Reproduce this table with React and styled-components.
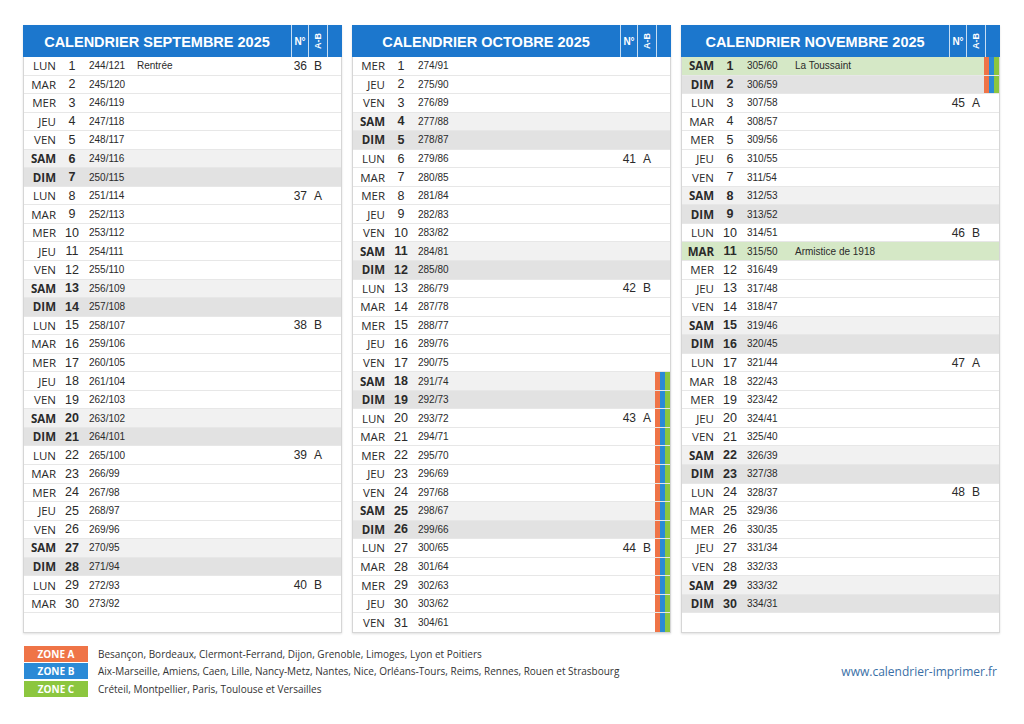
import React from 'react'
import styled, { createGlobalStyle } from 'styled-components'

const GlobalStyle = createGlobalStyle`
  body {
    margin: 0;
    background: #ffffff;
    font-family: 'Liberation Sans', Arial, sans-serif;
  }
`

const WEEKDAY = ['LUN', 'MAR', 'MER', 'JEU', 'VEN', 'SAM', 'DIM']

const MONTHS = [
  { name: 'SEPTEMBRE', days: 30, start: 244, wd: 0, events: { 1: 'Rentrée' }, green: [], zones: [] },
  { name: 'OCTOBRE', days: 31, start: 274, wd: 2, events: {}, green: [], zones: [18, 31] },
  {
    name: 'NOVEMBRE',
    days: 30,
    start: 305,
    wd: 5,
    events: { 1: 'La Toussaint', 11: 'Armistice de 1918' },
    green: [1, 11],
    zones: [1, 2],
  },
]

const ZONES = [
  { label: 'ZONE A', color: '#ef7447', text: 'Besançon, Bordeaux, Clermont-Ferrand, Dijon, Grenoble, Limoges, Lyon et Poitiers' },
  {
    label: 'ZONE B',
    color: '#2b8ad6',
    text: 'Aix-Marseille, Amiens, Caen, Lille, Nancy-Metz, Nantes, Nice, Orléans-Tours, Reims, Rennes, Rouen et Strasbourg',
  },
  { label: 'ZONE C', color: '#8cc63f', text: 'Créteil, Montpellier, Paris, Toulouse et Versailles' },
]

const ROW_BG = {
  normal: '#ffffff',
  sam: '#f1f1f1',
  dim: '#e2e2e2',
  holiday: '#d5e8c6',
  empty: '#ffffff',
}

const Page = styled.div`
  padding: 25px 24px 0 23px;
`

const Columns = styled.div`
  display: grid;
  grid-template-columns: repeat(3, 319px);
  gap: 10px;
`

const Month = styled.div`
  display: flex;
  flex-direction: column;
  box-shadow: 0 1px 2px rgba(0, 0, 0, 0.12);
`

const Header = styled.div`
  height: 32px;
  background: #1c77cd;
  display: grid;
  grid-template-columns: 1fr 17px 19px 15px;
  color: #ffffff;
`

const Title = styled.div`
  display: flex;
  align-items: center;
  justify-content: center;
  font-weight: bold;
  font-size: 14.5px;
  padding-top: 1px;
`

const HeadCell = styled.div`
  display: flex;
  align-items: center;
  justify-content: center;
  border-left: 1px solid rgba(255, 255, 255, 0.75);
  font-weight: bold;
  font-size: ${(p) => (p.$small ? '9px' : '10px')};
`

const Rotated = styled.span`
  display: inline-block;
  transform: rotate(-90deg);
  white-space: nowrap;
`

const Body = styled.div`
  border: 1px solid #d6d6d6;
  border-top: none;
`

const Row = styled.div`
  height: 18.55px;
  box-sizing: border-box;
  display: grid;
  grid-template-columns: 36px 24px 48px 1fr 17px 19px 15px;
  align-items: center;
  background: ${(p) => ROW_BG[p.$kind]};
  border-bottom: 1px solid #e7e7e7;
  color: #2a2a2a;
  &:last-child {
    border-bottom: none;
  }
`

const DayName = styled.div`
  font-family: 'Open Sans', sans-serif;
  font-size: 11.5px;
  text-align: right;
  padding-right: 4px;
  font-weight: ${(p) => (p.$bold ? 700 : 400)};
`

const DayNum = styled.div`
  font-size: 12.5px;
  text-align: center;
  font-weight: ${(p) => (p.$bold ? 700 : 400)};
`

const Small = styled.div`
  font-size: 10px;
  padding-left: 5px;
  white-space: nowrap;
`

const Week = styled.div`
  font-size: 12px;
  text-align: right;
`

const Letter = styled.div`
  font-size: 12px;
  text-align: center;
  padding-left: 3px;
`

const Stripes = styled.div`
  align-self: stretch;
  background: ${(p) =>
    p.$on ? 'linear-gradient(to right, #ef7447 0 5px, #2b8ad6 5px 10px, #8cc63f 10px 15px)' : 'transparent'};
`

const Footer = styled.div`
  display: flex;
  align-items: center;
  justify-content: space-between;
  padding: 13px 3px 0 1px;
`

const Legend = styled.div`
  display: flex;
  flex-direction: column;
  gap: 1.5px;
`

const LegendRow = styled.div`
  display: flex;
  align-items: center;
  gap: 10px;
`

const Badge = styled.div`
  width: 64px;
  height: 16px;
  background: ${(p) => p.$color};
  color: #ffffff;
  font-family: 'Open Sans', sans-serif;
  font-weight: 700;
  font-size: 10px;
  display: flex;
  align-items: center;
  justify-content: center;
`

const LegendText = styled.div`
  font-family: 'Open Sans', sans-serif;
  font-size: 10px;
  color: #333333;
`

const Url = styled.div`
  font-family: 'Open Sans', sans-serif;
  font-size: 12px;
  color: #3a6fa6;
`

const MonthColumn = ({ month }) => {
  const rows = []
  for (let i = 1; i <= 31; i++) {
    if (i > month.days) {
      rows.push(<Row key={i} $kind="empty" />)
      continue
    }
    const wd = (month.wd + i - 1) % 7
    const doy = month.start + i - 1
    let kind = 'normal'
    if (wd === 5) kind = 'sam'
    if (wd === 6) kind = 'dim'
    if (month.green.includes(i)) kind = 'holiday'
    const bold = wd >= 5 || month.green.includes(i)
    const week = wd === 0 ? 36 + (doy - 244) / 7 : null
    const zoneOn = month.zones.length > 0 && i >= month.zones[0] && i <= month.zones[1]
    rows.push(
      <Row key={i} $kind={kind}>
        <DayName $bold={bold}>{WEEKDAY[wd]}</DayName>
        <DayNum $bold={bold}>{i}</DayNum>
        <Small>
          {doy}/{365 - doy}
        </Small>
        <Small>{month.events[i] || ''}</Small>
        <Week>{week || ''}</Week>
        <Letter>{week ? (week % 2 ? 'A' : 'B') : ''}</Letter>
        <Stripes $on={zoneOn} />
      </Row>
    )
  }
  return (
    <Month>
      <Header>
        <Title>CALENDRIER {month.name} 2025</Title>
        <HeadCell>N°</HeadCell>
        <HeadCell $small>
          <Rotated>A-B</Rotated>
        </HeadCell>
        <HeadCell />
      </Header>
      <Body>{rows}</Body>
    </Month>
  )
}

const App = () => {
  return (
    <Page>
      <GlobalStyle />
      <Columns>
        {MONTHS.map((m) => (
          <MonthColumn key={m.name} month={m} />
        ))}
      </Columns>
      <Footer>
        <Legend>
          {ZONES.map((z) => (
            <LegendRow key={z.label}>
              <Badge $color={z.color}>{z.label}</Badge>
              <LegendText>{z.text}</LegendText>
            </LegendRow>
          ))}
        </Legend>
        <Url>www.calendrier-imprimer.fr</Url>
      </Footer>
    </Page>
  )
}

export default App
